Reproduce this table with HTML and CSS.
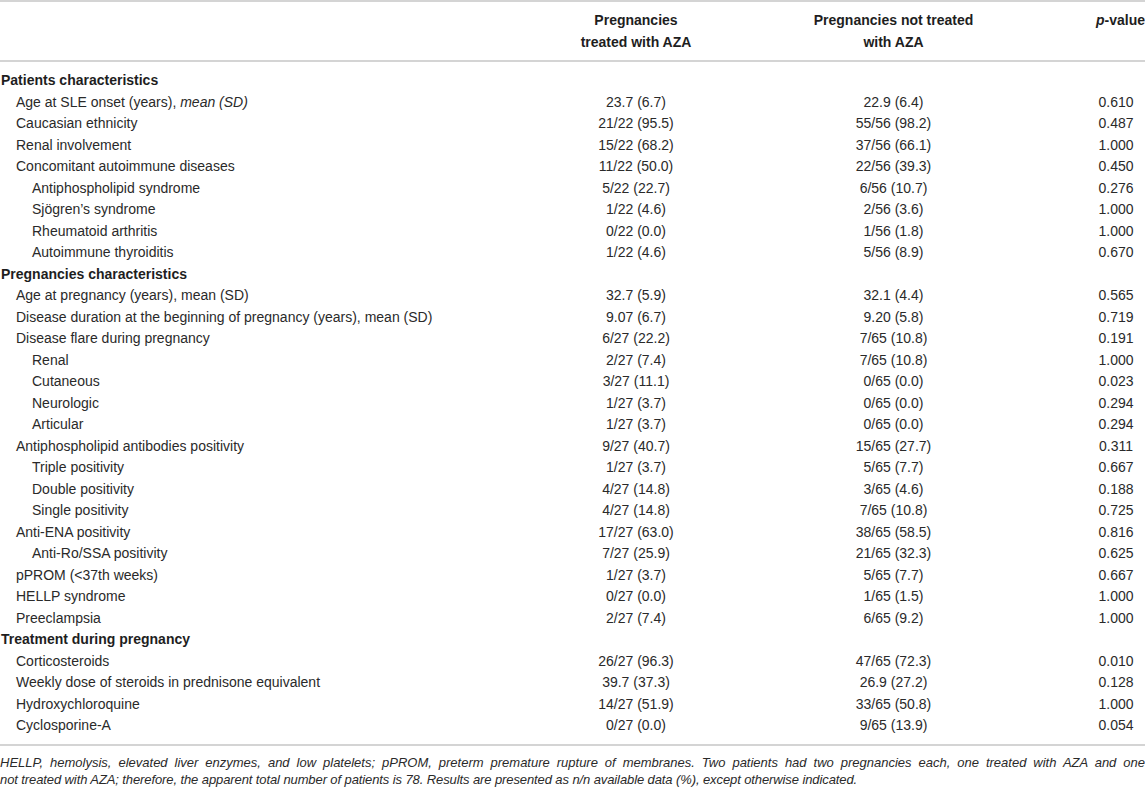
FILE: index.html
```html
<!DOCTYPE html>
<html lang="en">
<head>
<meta charset="utf-8">
<title>Table</title>
<link rel="stylesheet" href="styles.css">
</head>
<body>
<table class="data">
  <colgroup>
    <col class="c1"><col class="c2"><col class="c3"><col class="c4">
  </colgroup>
  <thead>
    <tr>
      <th class="lbl"></th>
      <th>Pregnancies<br>treated with AZA</th>
      <th>Pregnancies not treated<br>with AZA</th>
      <th class="pv"><i>p</i>-value</th>
    </tr>
  </thead>
  <tbody>
    <tr class="sec first"><td>Patients characteristics</td><td></td><td></td><td></td></tr>
    <tr><td class="i1">Age at SLE onset (years), <i>mean (SD)</i></td><td>23.7 (6.7)</td><td>22.9 (6.4)</td><td>0.610</td></tr>
    <tr><td class="i1">Caucasian ethnicity</td><td>21/22 (95.5)</td><td>55/56 (98.2)</td><td>0.487</td></tr>
    <tr><td class="i1">Renal involvement</td><td>15/22 (68.2)</td><td>37/56 (66.1)</td><td>1.000</td></tr>
    <tr><td class="i1">Concomitant autoimmune diseases</td><td>11/22 (50.0)</td><td>22/56 (39.3)</td><td>0.450</td></tr>
    <tr><td class="i2">Antiphospholipid syndrome</td><td>5/22 (22.7)</td><td>6/56 (10.7)</td><td>0.276</td></tr>
    <tr><td class="i2">Sjögren’s syndrome</td><td>1/22 (4.6)</td><td>2/56 (3.6)</td><td>1.000</td></tr>
    <tr><td class="i2">Rheumatoid arthritis</td><td>0/22 (0.0)</td><td>1/56 (1.8)</td><td>1.000</td></tr>
    <tr><td class="i2">Autoimmune thyroiditis</td><td>1/22 (4.6)</td><td>5/56 (8.9)</td><td>0.670</td></tr>
    <tr class="sec"><td>Pregnancies characteristics</td><td></td><td></td><td></td></tr>
    <tr><td class="i1">Age at pregnancy (years), mean (SD)</td><td>32.7 (5.9)</td><td>32.1 (4.4)</td><td>0.565</td></tr>
    <tr><td class="i1">Disease duration at the beginning of pregnancy (years), mean (SD)</td><td>9.07 (6.7)</td><td>9.20 (5.8)</td><td>0.719</td></tr>
    <tr><td class="i1">Disease flare during pregnancy</td><td>6/27 (22.2)</td><td>7/65 (10.8)</td><td>0.191</td></tr>
    <tr><td class="i2">Renal</td><td>2/27 (7.4)</td><td>7/65 (10.8)</td><td>1.000</td></tr>
    <tr><td class="i2">Cutaneous</td><td>3/27 (11.1)</td><td>0/65 (0.0)</td><td>0.023</td></tr>
    <tr><td class="i2">Neurologic</td><td>1/27 (3.7)</td><td>0/65 (0.0)</td><td>0.294</td></tr>
    <tr><td class="i2">Articular</td><td>1/27 (3.7)</td><td>0/65 (0.0)</td><td>0.294</td></tr>
    <tr><td class="i1">Antiphospholipid antibodies positivity</td><td>9/27 (40.7)</td><td>15/65 (27.7)</td><td>0.311</td></tr>
    <tr><td class="i2">Triple positivity</td><td>1/27 (3.7)</td><td>5/65 (7.7)</td><td>0.667</td></tr>
    <tr><td class="i2">Double positivity</td><td>4/27 (14.8)</td><td>3/65 (4.6)</td><td>0.188</td></tr>
    <tr><td class="i2">Single positivity</td><td>4/27 (14.8)</td><td>7/65 (10.8)</td><td>0.725</td></tr>
    <tr><td class="i1">Anti-ENA positivity</td><td>17/27 (63.0)</td><td>38/65 (58.5)</td><td>0.816</td></tr>
    <tr><td class="i2">Anti-Ro/SSA positivity</td><td>7/27 (25.9)</td><td>21/65 (32.3)</td><td>0.625</td></tr>
    <tr><td class="i1">pPROM (&lt;37th weeks)</td><td>1/27 (3.7)</td><td>5/65 (7.7)</td><td>0.667</td></tr>
    <tr><td class="i1">HELLP syndrome</td><td>0/27 (0.0)</td><td>1/65 (1.5)</td><td>1.000</td></tr>
    <tr><td class="i1">Preeclampsia</td><td>2/27 (7.4)</td><td>6/65 (9.2)</td><td>1.000</td></tr>
    <tr class="sec"><td>Treatment during pregnancy</td><td></td><td></td><td></td></tr>
    <tr><td class="i1">Corticosteroids</td><td>26/27 (96.3)</td><td>47/65 (72.3)</td><td>0.010</td></tr>
    <tr><td class="i1">Weekly dose of steroids in prednisone equivalent</td><td>39.7 (37.3)</td><td>26.9 (27.2)</td><td>0.128</td></tr>
    <tr><td class="i1">Hydroxychloroquine</td><td>14/27 (51.9)</td><td>33/65 (50.8)</td><td>1.000</td></tr>
    <tr class="last"><td class="i1">Cyclosporine-A</td><td>0/27 (0.0)</td><td>9/65 (13.9)</td><td>0.054</td></tr>
  </tbody>
</table>
<div class="foot">
  <p class="fl1">HELLP, hemolysis, elevated liver enzymes, and low platelets; pPROM, preterm premature rupture of membranes. Two patients had two pregnancies each, one treated with AZA and one</p>
  <p class="fl2">not treated with AZA; therefore, the apparent total number of patients is 78. Results are presented as n/n available data (%), except otherwise indicated.</p>
</div>
</body>
</html>
```

FILE: styles.css
```css
html, body {
  margin: 0;
  padding: 0;
  background: #ffffff;
  overflow: hidden;
}

body {
  font-family: "Liberation Sans", Arial, sans-serif;
  font-size: 14px;
  color: #2a2a2a;
}

.data {
  width: 1145px;
  table-layout: fixed;
  border-collapse: separate;
  border-spacing: 0;
  border-top: 2px solid #d4d4d4;
  border-bottom: 2px solid #d4d4d4;
}

.c1 { width: 572px; }
.c2 { width: 128px; }
.c3 { width: 387px; }
.c4 { width: 58px; }

.data th {
  font-weight: bold;
  line-height: 22px;
  padding: 7px 0;
  text-align: center;
  vertical-align: top;
  border-bottom: 2px solid #d4d4d4;
  white-space: nowrap;
  color: #1e1e1e;
}

.data th.pv {
  text-align: right;
}

.data td {
  padding: 0;
  height: 21.5px;
  line-height: 21.5px;
  text-align: center;
  white-space: nowrap;
}

.data td:first-child {
  text-align: left;
  padding-left: 1px;
}

.data td.i1 { padding-left: 16px; }
.data td.i2 { padding-left: 32px; }

.data tr.sec td:first-child {
  font-weight: bold;
  color: #1e1e1e;
}

.data tr.first td { padding-top: 8px; }
.data tr.last td { padding-bottom: 7px; }

.foot {
  padding-top: 8px;
  font-size: 13px;
  font-style: italic;
  line-height: 17.5px;
}

.foot p {
  margin: 0;
}

.fl1 {
  text-align: justify;
  text-align-last: justify;
}

.fl2 {
  text-align: left;
  letter-spacing: -0.1px;
}
```
